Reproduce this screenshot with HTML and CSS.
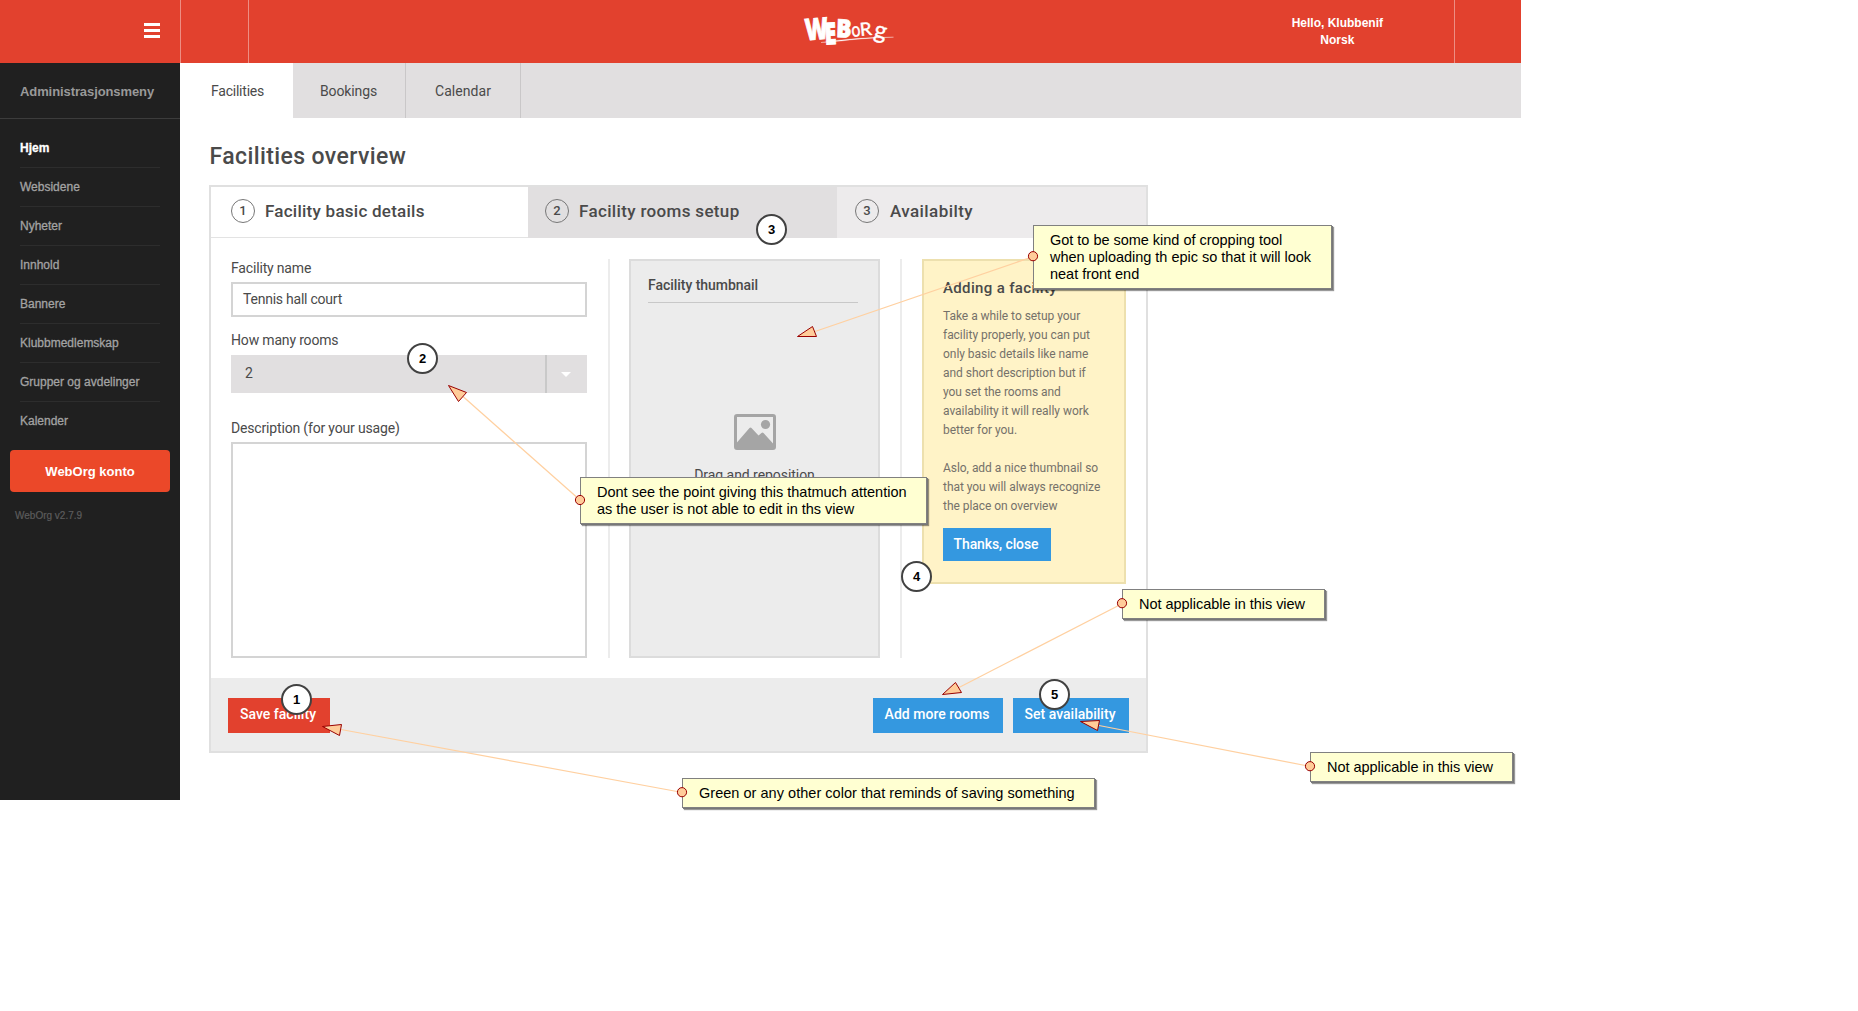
FILE: index.html
```html
<!DOCTYPE html>
<html lang="en">
<head>
<meta charset="utf-8">
<title>Facilities overview</title>
<link rel="stylesheet" href="styles.css">
</head>
<body>
<div class="app">
  <header class="topbar">
    <div class="menu-cell"><div class="burger"><i></i><i></i><i></i></div></div>
    <div class="blank-cell"></div>
    <div class="brand-cell">
      <svg class="logo" width="92" height="48" viewBox="805 7 92 48" fill="#fff" stroke="#fff">
        <g font-family="Open Sans, sans-serif" font-weight="800" stroke-width=".9">
          <text transform="translate(807 40.500) rotate(-5) scale(.74 1)" font-size="30">W</text>
          <text transform="translate(826 44.500) rotate(-3) scale(.72 1)" font-size="30">E</text>
          <text transform="translate(837 37) rotate(2) scale(.9 1)" font-size="25">B</text>
        </g>
        <g font-family="Lato, sans-serif" stroke-width=".4">
          <text transform="translate(853 37) rotate(-6) scale(.8 1)" font-size="20">o</text>
          <text transform="translate(861.500 36) rotate(-6) scale(1.050 1)" font-size="18">R</text>
          <text transform="translate(874 37) rotate(12)" font-size="24">g</text>
        </g>
        <path d="M822 42.500Q860 37 894.500 37.200Q862 38.200 842 41z" stroke-width=".3"/>
      </svg>
      <div class="user">Hello, Klubbenif<br>Norsk</div>
    </div>
    <div class="end-cell"></div>
  </header>

  <div class="main">
    <aside class="sidebar">
      <h2>Administrasjonsmeny</h2>
      <ul>
        <li class="current">Hjem</li>
        <li>Websidene</li>
        <li>Nyheter</li>
        <li>Innhold</li>
        <li>Bannere</li>
        <li>Klubbmedlemskap</li>
        <li>Grupper og avdelinger</li>
        <li>Kalender</li>
      </ul>
      <div class="account">WebOrg konto</div>
      <div class="version">WebOrg v2.7.9</div>
    </aside>

    <div class="content">
      <nav class="tabs">
        <div class="tab tab-facilities">Facilities</div>
        <div class="tab tab-bookings">Bookings</div>
        <div class="tab tab-calendar">Calendar</div>
      </nav>
      <h1>Facilities overview</h1>

      <section class="panel">
        <div class="steps">
          <div class="step step-1"><b>1</b><span>Facility basic details</span></div>
          <div class="step step-2"><b>2</b><span>Facility rooms setup</span></div>
          <div class="step step-3"><b>3</b><span>Availabilty</span></div>
        </div>
        <div class="columns">
          <div class="form">
            <label>Facility name</label>
            <div class="field">Tennis hall court</div>
            <label class="label-rooms">How many rooms</label>
            <div class="select"><span>2</span><div class="caret"><i></i></div></div>
            <label class="label-desc">Description (for your usage)</label>
            <div class="textarea"></div>
          </div>
          <div class="rule rule-1"></div>
          <div class="thumb">
            <h3>Facility thumbnail</h3>
            <svg width="42" height="36" viewBox="0 0 42 36">
              <rect x="1.500" y="1.500" width="39" height="33" rx="1.500" fill="none" stroke="#a5a5a5" stroke-width="3"/>
              <circle cx="31.500" cy="10.500" r="4.600" fill="#a5a5a5"/>
              <path d="M2.500 29 15.500 14q1-1 2 0l7 7.500 3-2.600q1-.8 2 .1L39.500 30v4.500h-37z" fill="#a5a5a5"/>
            </svg>
            <p>Drag and reposition</p>
          </div>
          <div class="rule rule-2"></div>
          <div class="tip">
            <h3>Adding a facility</h3>
            <p>Take a while to setup your<br>facility properly, you can put<br>only basic details like name<br>and short description but if<br>you set the rooms and<br>availability it will really work<br>better for you.<br><br>Aslo, add a nice thumbnail so<br>that you will always recognize<br>the place on overview</p>
            <div class="btn btn-close">Thanks, close</div>
          </div>
        </div>
        <footer class="actions">
          <div class="btn btn-save">Save facility</div>
          <div class="btn btn-rooms">Add more rooms</div>
          <div class="btn btn-avail">Set availability</div>
        </footer>
      </section>
    </div>
  </div>
</div>

<div class="note note-crop">Got to be some kind of cropping tool<br>when uploading th epic so that it will look<br>neat front end</div>
<div class="note note-rooms">Dont see the point giving this thatmuch attention<br>as the user is not able to edit in ths view</div>
<div class="note note-add">Not applicable in this view</div>
<div class="note note-save">Green or any other color that reminds of saving something</div>
<div class="note note-avail">Not applicable in this view</div>

<svg class="arrows" width="1858" height="1011" viewBox="0 0 1858 1011">
  <g class="lines">
    <path d="M1033.500 256.500 815 331.500"/>
    <path d="M580.500 500.500 463 396.500"/>
    <path d="M1122.500 603.500 959 687.500"/>
    <path d="M682.500 792.500 341 729.500"/>
    <path d="M1310.500 766.500 1099 725.500"/>
  </g>
  <g class="marks">
    <path d="M797.500 336.500 812.500 326.500 816.500 336.500z"/>
    <path d="M448.500 385.500 466.500 392.500 458.500 401.500z"/>
    <path d="M942.500 694.500 955.500 682.500 961.500 692.500z"/>
    <path d="M322.500 726.500 341.500 724.500 339.500 735.500z"/>
    <path d="M1080.500 721.500 1099.500 720.500 1097.500 730.500z"/>
    <circle cx="1033" cy="256.200" r="4.600"/>
    <circle cx="580" cy="500" r="4.600"/>
    <circle cx="1122" cy="603.200" r="4.600"/>
    <circle cx="682" cy="792.200" r="4.600"/>
    <circle cx="1310" cy="766.200" r="4.600"/>
  </g>
</svg>

<div class="pin pin-1">1</div>
<div class="pin pin-2">2</div>
<div class="pin pin-3">3</div>
<div class="pin pin-4">4</div>
<div class="pin pin-5">5</div>
</body>
</html>
```
FILE: styles.css
```css
* { box-sizing: border-box; }
body {
  margin: 0;
  position: relative;
  height: 1011px;
  overflow: hidden;
  background: #fff;
  color: #4a4a4a;
  font: 14px/20px Roboto, sans-serif;
}
h1, h2, h3, p, ul { margin: 0; padding: 0; font-weight: 500; }
.app { width: 1521px; }

/* top bar */
.topbar {
  display: flex;
  height: 63px;
  background: #e2412e;
  color: #fff;
}
.menu-cell { width: 181px; border-right: 1px solid #ed8e83; padding: 23px 0 0 144px; }
.burger { display: flex; flex-direction: column; gap: 3px; width: 16px; }
.burger i { height: 3px; background: #fff; }
.blank-cell { width: 68px; border-right: 1px solid #ed8e83; }
.brand-cell { flex: 1; display: grid; grid-template-columns: 1fr auto 1fr; }
.logo { grid-column: 2; margin: 7px 2px 0 -2px; overflow: visible; }
.user {
  justify-self: end;
  margin: 15px 71px 0 0;
  text-align: center;
  white-space: nowrap;
  font: bold 12px/17px "Liberation Sans", Arial, sans-serif;
}
.end-cell { width: 67px; border-left: 1px solid #ed8e83; }

.main { display: flex; height: 737px; }

/* sidebar */
.sidebar {
  width: 180px;
  background: #202020;
  color: #a3a3a3;
  font: 12px/38px "Liberation Sans", Arial, sans-serif;
}
.sidebar h2 {
  height: 56px;
  padding-left: 20px;
  border-bottom: 1px solid #3c3c3c;
  font: bold 13px/57px "Liberation Sans", Arial, sans-serif;
  letter-spacing: -.09px;
  color: #999;
}
.sidebar ul { list-style: none; padding: 10px 20px 0; }
.sidebar li {
  height: 39px;
  border-bottom: 1px solid #2d2d2d;
  font-weight: normal;
  -webkit-text-stroke: .3px;
  white-space: nowrap;
}
.sidebar li:last-child { border: 0; }
.sidebar .current { color: #fff; font-weight: bold; }
.account {
  margin: 9px 10px 0;
  height: 42px;
  border-radius: 4px;
  background: #eb4829;
  color: #fff;
  text-align: center;
  font-weight: bold;
  font-size: 13px;
  line-height: 43px;
}
.version { margin: 14px 0 0 15px; font-size: 10px; line-height: 20px; color: #5c5c5c; -webkit-text-stroke: .2px; }

/* section tabs */
.content { flex: 1; }
.tabs { display: flex; height: 55px; background: #e1dfe0; line-height: 57px; }
.tab { border-right: 1px solid #c9c7c8; }
.tab-facilities { width: 113px; padding-left: 31px; background: #fff; border: 0; letter-spacing: -.23px; }
.tab-bookings { width: 113px; padding-left: 27px; letter-spacing: -.12px; }
.tab-calendar { width: 115px; padding-left: 29px; letter-spacing: .06px; }
h1 { margin: 24px 0 13px 29.500px; font-size: 23px; line-height: 30px; letter-spacing: .4px; }

/* wizard panel */
.panel { width: 939px; margin-left: 29px; border: 2px solid #e0e0e0; height: 568px; }
.steps { display: flex; height: 51px; }
.step {
  display: flex;
  gap: 10px;
  padding: 12px 0 0 20px;
  font-size: 17px;
  line-height: 24px;
  font-weight: 500;
  letter-spacing: .25px;
}
.step b {
  width: 24px;
  height: 24px;
  border: 1px solid #777;
  border-radius: 50%;
  text-align: center;
  font-size: 13px;
  line-height: 22px;
  font-weight: 500;
  letter-spacing: 0;
}
.step-1 { width: 317px; border-bottom: 1px solid #e3e3e3; }
.step-2 { width: 309px; padding-left: 17px; background: #e1dfe0; letter-spacing: .34px; }
.step-3 { width: 309px; padding-left: 18px; gap: 11px; background: #edebec; letter-spacing: .42px; }

.columns { display: flex; height: 440px; padding: 21px 20px 20px; }
.form { width: 356px; letter-spacing: -.17px; }
.form label { display: block; line-height: 18px; }
.field { margin-top: 5px; height: 35px; border: 2px solid #d4d4d4; padding-left: 10px; line-height: 31px; letter-spacing: -.23px; }
.form .label-rooms { margin-top: 14px; }
.select { display: flex; justify-content: space-between; margin-top: 6px; height: 38px; background: #e1dfe0; padding-left: 14px; line-height: 37px; }
.caret { width: 42px; border-left: 2px solid #c9c9c9; padding: 17px 0 0 14px; }
.caret i { display: block; width: 10px; border: 5px solid transparent; border-top-color: #fff; border-bottom: 0; }
.form .label-desc { margin-top: 26px; }
.textarea { margin-top: 5px; height: 216px; border: 2px solid #d4d4d4; }
.rule { width: 2px; background: #ececec; }
.rule-1 { margin: 0 19px 0 21px; }
.rule-2 { margin: 0 20px; }

.thumb { width: 251px; border: 2px solid #dcdcdc; background: #ececec; padding: 14px 17px 0; text-align: center; }
.thumb h3 {
  margin-right: 3px;
  padding-bottom: 7px;
  border-bottom: 1px solid #c8c8c8;
  text-align: left;
  font-size: 14px;
  letter-spacing: -.04px;
}
.thumb svg { display: block; margin: 111px auto 0; }
.thumb p { margin-top: 15px; font-weight: 400; letter-spacing: -.05px; }

.tip { width: 204px; height: 325px; border: 2px solid #ede0ae; background: #fff3c7; padding: 17px 0 0 19px; }
.tip h3 { font-size: 15px; letter-spacing: .35px; }
.tip p { margin: 9px 0 12px; font-size: 12px; line-height: 19px; font-weight: 400; color: #75716a; white-space: nowrap; letter-spacing: -.04px; }

.btn { height: 35px; padding-right: 2px; background: #3498e0; color: #fff; text-align: center; line-height: 33px; font-weight: 500; letter-spacing: .02px; }
.btn-close { width: 108px; height: 33px; letter-spacing: -.11px; }
.actions { display: flex; gap: 10px; height: 73px; padding: 20px 17px 0; background: #ececec; }
.btn-save { width: 102px; margin-right: auto; background: #e2412e; }
.btn-rooms { width: 130px; }
.btn-avail { width: 116px; }

/* review annotations laid over the page */
.note {
  position: absolute;
  padding: 6px 0 0 16px;
  border: 1px solid #808080;
  background: #ffffd2;
  box-shadow: 1px 1px 0 #777, 2px 2px 1px rgba(0, 0, 0, .4);
  color: #000;
  font: 14.500px/17px "Liberation Sans", Arial, sans-serif;
  white-space: nowrap;
}
.note-crop { left: 1033px; top: 225px; width: 299px; height: 64px; letter-spacing: -.02px; }
.note-rooms { left: 580px; top: 477px; width: 347px; height: 47px; }
.note-add { left: 1122px; top: 589px; width: 203px; height: 30px; letter-spacing: -.03px; }
.note-save { left: 682px; top: 778px; width: 413px; height: 30px; letter-spacing: .03px; }
.note-avail { left: 1310px; top: 752px; width: 203px; height: 30px; letter-spacing: -.03px; }

.arrows { position: absolute; left: 0; top: 0; }
.lines { fill: none; stroke: #ffd0a0; stroke-width: 1.200; }
.marks { fill: #ffcc99; stroke: #990000; }

.pin {
  position: absolute;
  width: 31px;
  height: 31px;
  border: 2px solid #414141;
  border-radius: 50%;
  background: #fff;
  color: #000;
  text-align: center;
  font: bold 13px/28px "Liberation Sans Narrow", "Liberation Sans", sans-serif;
}
.pin-1 { left: 281px; top: 684px; }
.pin-2 { left: 407px; top: 343px; }
.pin-3 { left: 756px; top: 214px; }
.pin-4 { left: 901px; top: 561px; }
.pin-5 { left: 1039px; top: 679px; }
```
